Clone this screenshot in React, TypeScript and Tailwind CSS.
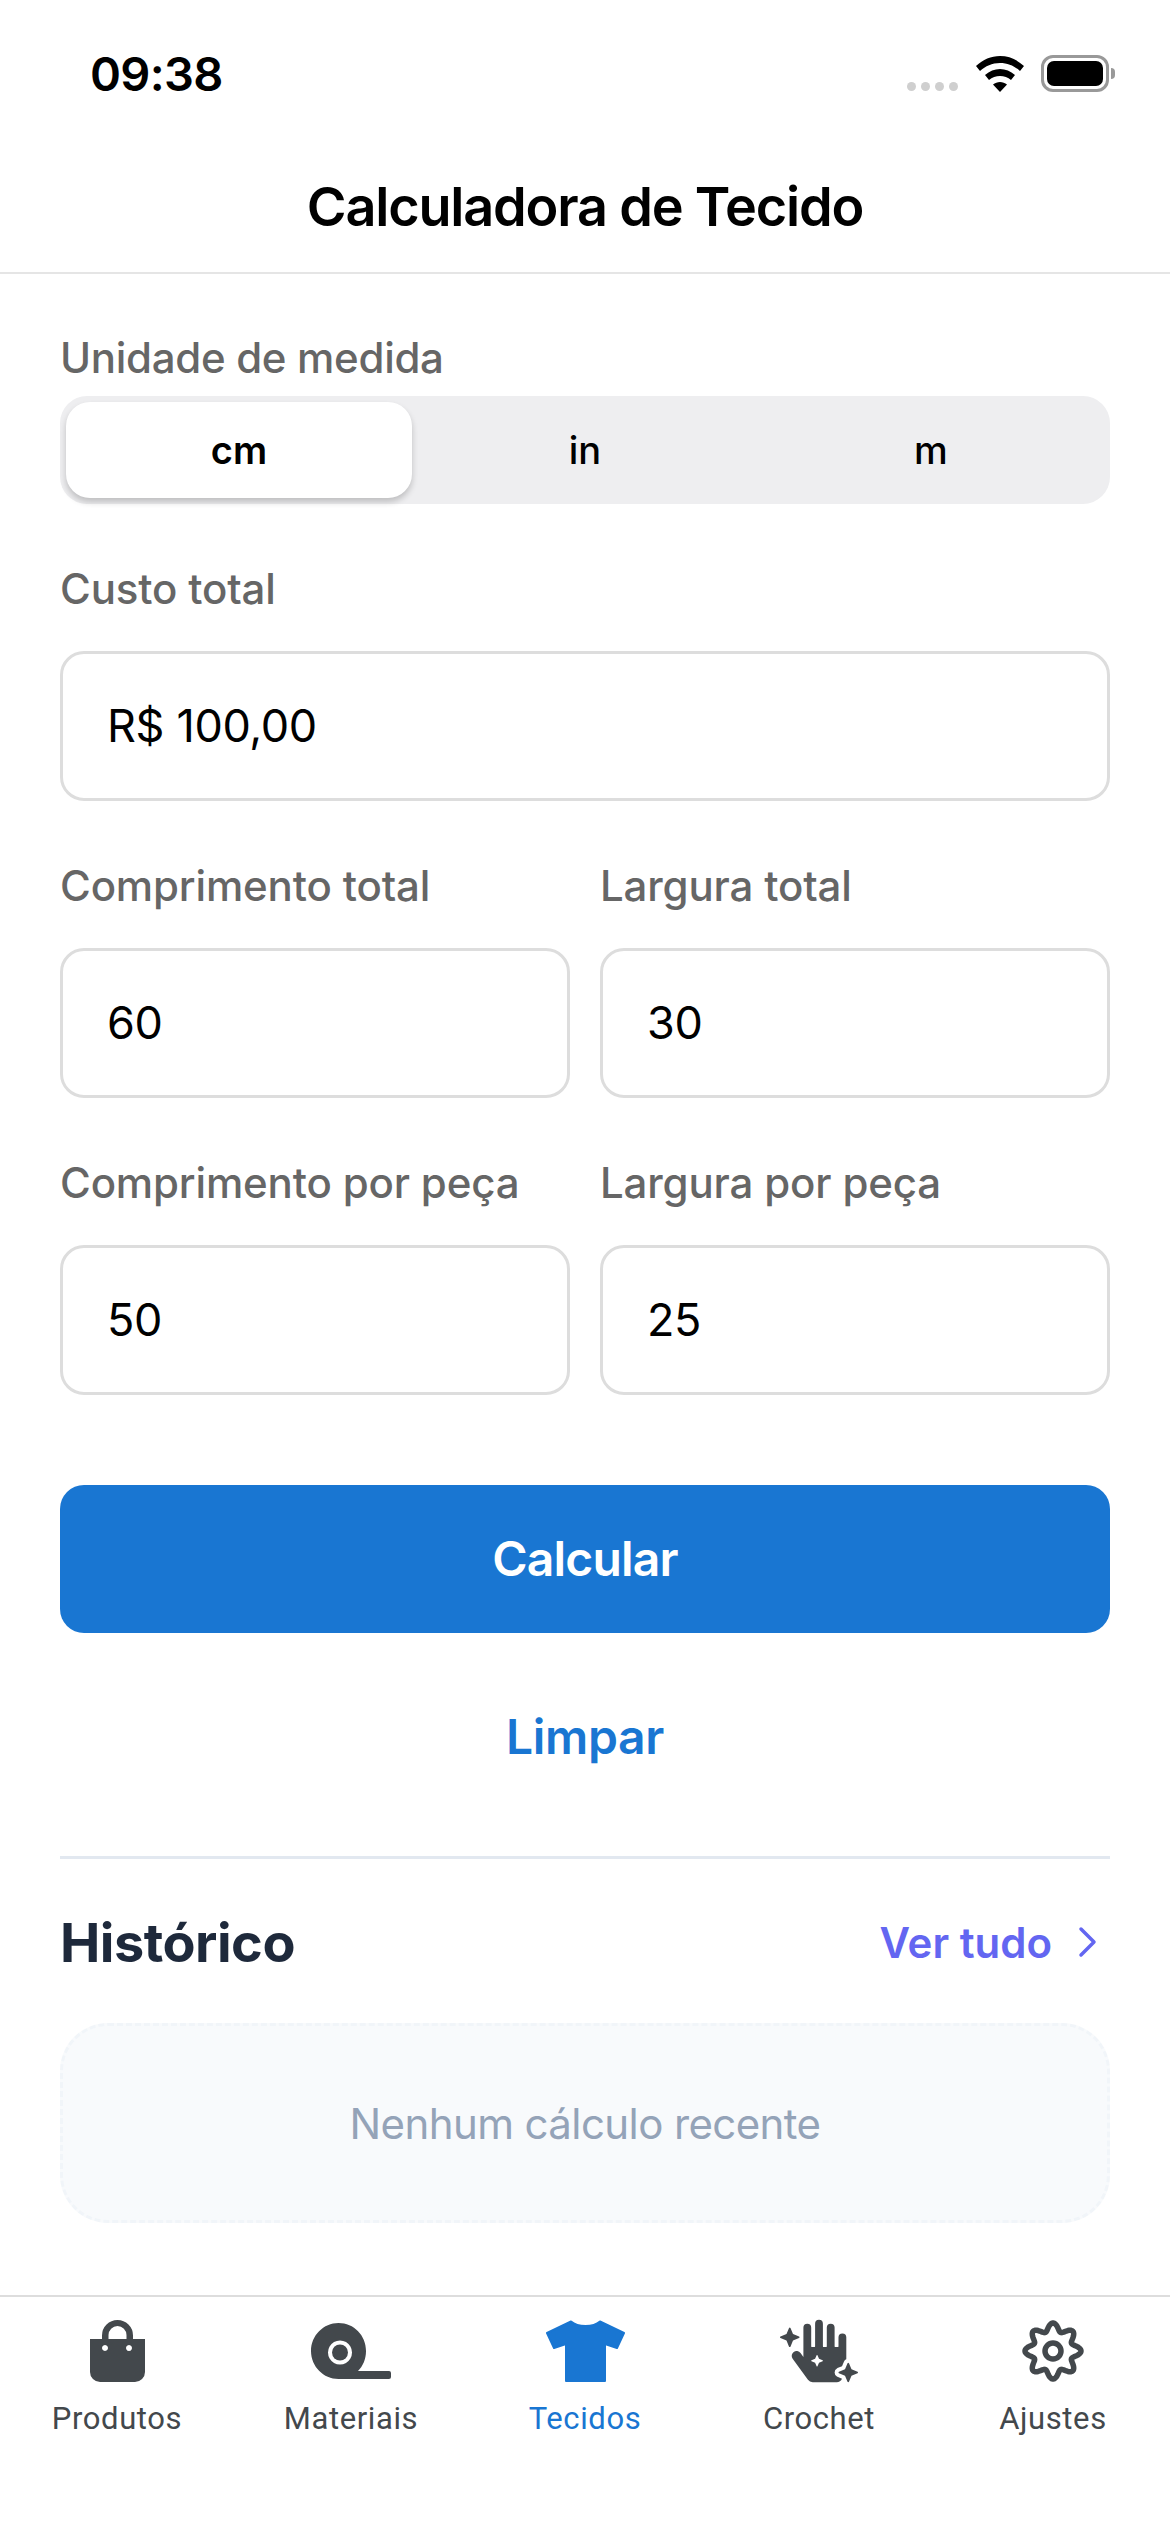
import React from "react";
import { FaHandSparkles } from "react-icons/fa";

function Field({ label, value }: { label: string; value: string }) {
  return (
    <div className="flex-1 min-w-0">
      <div className="h-[60px] leading-[60px] text-[42px] font-medium tracking-[-0.15px] text-[#666666]">{label}</div>
      <div className="mt-[32px] h-[150px] rounded-[24px] border-[3px] border-[#dddddd] pl-[44px] flex items-center text-[45px] tracking-[-0.35px] text-black">{value}</div>
    </div>
  );
}

function BagIcon() {
  return (
    <svg width="55" height="62" viewBox="0 0 55 62">
      <path fill="#43484c" fillRule="evenodd" d="M0 19h12V15.500a15.500 15.500 0 0 1 31 0V19h12v33a10 10 0 0 1-10 10H10A10 10 0 0 1 0 52z M18.500 19h18V15a9 9 0 0 0-18 0z M15 25a3 3 0 1 0 .01 0z M39 25a3 3 0 1 0 .01 0z" />
    </svg>
  );
}

function TapeIcon() {
  return (
    <svg width="80" height="56" viewBox="0 0 80 56">
      <path fill="#43484c" fillRule="evenodd" d="M27.500 0C43 0 55 12.500 55 28 55 36 52 43 47 48H78a2 2 0 0 1 2 2V54a2 2 0 0 1-2 2H27.500C12.500 56 0 43.500 0 28 0 12.500 12.500 0 27.500 0z M29 17.500a12 12 0 1 0 .01 0z" />
      <circle cx="29" cy="29.500" r="8" fill="#43484c" />
    </svg>
  );
}

function ShirtIcon() {
  return (
    <svg width="79" height="62" viewBox="0 0 79 62">
      <path fill="currentColor" stroke="currentColor" strokeWidth="2" strokeLinejoin="round" d="M25 1.500C29 5 34 6 39.500 6S50 5 54 1.500L78 13 71 28 59 24V61H20V24L8 28 1 13z" />
    </svg>
  );
}

const gearPath = (() => {
  const pts: string[] = [];
  for (let i = 0; i < 160; i++) {
    const t = (i / 160) * Math.PI * 2;
    const r = 24 + 4 * Math.cos(8 * t);
    pts.push(`${(32 + r * Math.cos(t)).toFixed(2)} ${(32 + r * Math.sin(t)).toFixed(2)}`);
  }
  return `M${pts.join("L")}Z`;
})();

function GearIcon() {
  return (
    <svg width="64" height="64" viewBox="0 0 64 64" fill="none" stroke="#43484c" strokeWidth="5.500">
      <path d={gearPath} strokeLinejoin="round" />
      <circle cx="32" cy="32" r="8" />
    </svg>
  );
}

function Tab({ label, active, children }: { label: string; active?: boolean; children: React.ReactNode }) {
  return (
    <div className={`flex-1 flex flex-col items-center ${active ? "text-[#1976d2]" : "text-[#43484c]"}`}>
      <div className="h-[72px] flex items-center justify-center">{children}</div>
      <div className="mt-[10px] h-[44px] leading-[44px] text-[31px] tracking-[0.6px] [font-family:Roboto,sans-serif]">{label}</div>
    </div>
  );
}

export default function App() {
  return (
    <div className="relative w-[1170px] h-[2532px] bg-white overflow-hidden flex flex-col [font-family:Inter,sans-serif] text-black">
      <div className="h-[180px] shrink-0">
        <div className="h-[147px] flex items-start justify-between pl-[90px] pr-[55px] pt-[45px]">
          <div className="text-[47px] leading-[58px] font-semibold tracking-[-0.7px]">09:38</div>
          <div className="flex items-start pt-[10px]">
            <div className="flex gap-[5px] mt-[27px] mr-[17px]">
              <div className="w-[9px] h-[9px] rounded-full bg-[#cfcfcf]" />
              <div className="w-[9px] h-[9px] rounded-full bg-[#cfcfcf]" />
              <div className="w-[9px] h-[9px] rounded-full bg-[#cfcfcf]" />
              <div className="w-[9px] h-[9px] rounded-full bg-[#cfcfcf]" />
            </div>
            <svg width="50" height="37" viewBox="0 0 50 37" className="mr-[16px]">
              <path d="M25 1c9 0 17 3.500 24 10l-4 5C39.500 11 33 8 25 8S10.500 11 5 16l-4-5C8 4.500 16 1 25 1z" fill="#000" />
              <path d="M25 14c5.500 0 10.500 2 15 6l-4 5c-3-2.500-7-4-11-4s-8 1.500-11 4l-4-5c4.500-4 9.500-6 15-6z" fill="#000" />
              <path d="M25 27c2.500 0 5 1 7 2.500L25 37l-7-7.500c2-1.500 4.500-2.500 7-2.500z" fill="#000" />
            </svg>
            <div className="w-[68px] h-[37px] rounded-[12px] border-[3px] border-[#999999] p-[3px]">
              <div className="w-full h-full rounded-[7px] bg-black" />
            </div>
            <div className="w-[4px] h-[11px] mt-[13px] ml-[2px] rounded-r-full bg-[#999999]" />
          </div>
        </div>
      </div>

      <div className="h-[95px] -mt-[1px] shrink-0 border-b-[2px] border-[#e5e5e5] flex items-start justify-center">
        <div className="-mt-[3px] text-[54px] leading-[62px] font-semibold tracking-[-1.2px]">Calculadora de Tecido</div>
      </div>

      <div className="flex-1 px-[60px] pt-[54px]">
        <div className="h-[60px] leading-[60px] text-[42px] font-medium tracking-[-0.3px] text-[#666666]">Unidade de medida</div>
        <div className="mt-[8px] h-[108px] rounded-[27px] bg-[#eeeef0] p-[6px] flex">
          <div className="w-[346px] rounded-[24px] bg-white shadow-[0_4px_6px_rgba(0,0,0,0.2)] flex items-center justify-center text-[38px] font-semibold">cm</div>
          <div className="flex-1 flex items-center justify-center text-[38px] font-medium">in</div>
          <div className="flex-1 flex items-center justify-center text-[38px] font-medium">m</div>
        </div>

        <div className="mt-[55px]">
          <Field label="Custo total" value="R$ 100,00" />
        </div>
        <div className="mt-[55px] flex gap-[30px]">
          <Field label="Comprimento total" value="60" />
          <Field label="Largura total" value="30" />
        </div>
        <div className="mt-[55px] flex gap-[30px]">
          <Field label="Comprimento por peça" value="50" />
          <Field label="Largura por peça" value="25" />
        </div>

        <div className="mt-[90px] h-[148px] rounded-[24px] bg-[#1976d2] flex items-center justify-center text-white text-[48px] font-semibold tracking-[-0.8px]">Calcular</div>
        <div className="mt-[73px] h-[62px] leading-[62px] text-center text-[#1976d2] text-[48px] font-semibold tracking-[-0.3px]">Limpar</div>

        <div className="mt-[88px] h-[3px] bg-[#e2e8f0]" />

        <div className="mt-[51px] h-[64px] flex items-center justify-between">
          <div className="text-[54px] font-bold tracking-[-0.5px] text-[#1e293b]">Histórico</div>
          <div className="flex items-center text-[#6366f1] text-[42px] font-semibold">
            Ver tudo
            <svg width="24" height="36" viewBox="0 0 24 36" fill="none" stroke="currentColor" strokeWidth="3.500" strokeLinecap="round" strokeLinejoin="round" className="ml-[24px] mr-[10px]">
              <path d="M5 5l13 13L5 31" />
            </svg>
          </div>
        </div>

        <div className="mt-[49px] h-[200px] rounded-[48px] bg-[#f8fafc] border-[3px] border-dashed border-[#f1f5f9] flex items-center justify-center text-[42px] tracking-[-0.6px] text-[#94a3b8]">Nenhum cálculo recente</div>
      </div>

      <div className="h-[237px] shrink-0 border-t-[2px] border-[#dddddd] pt-[18px] flex">
        <Tab label="Produtos"><BagIcon /></Tab>
        <Tab label="Materiais"><TapeIcon /></Tab>
        <Tab label="Tecidos" active><ShirtIcon /></Tab>
        <Tab label="Crochet"><FaHandSparkles size={78} /></Tab>
        <Tab label="Ajustes"><GearIcon /></Tab>
      </div>
    </div>
  );
}
